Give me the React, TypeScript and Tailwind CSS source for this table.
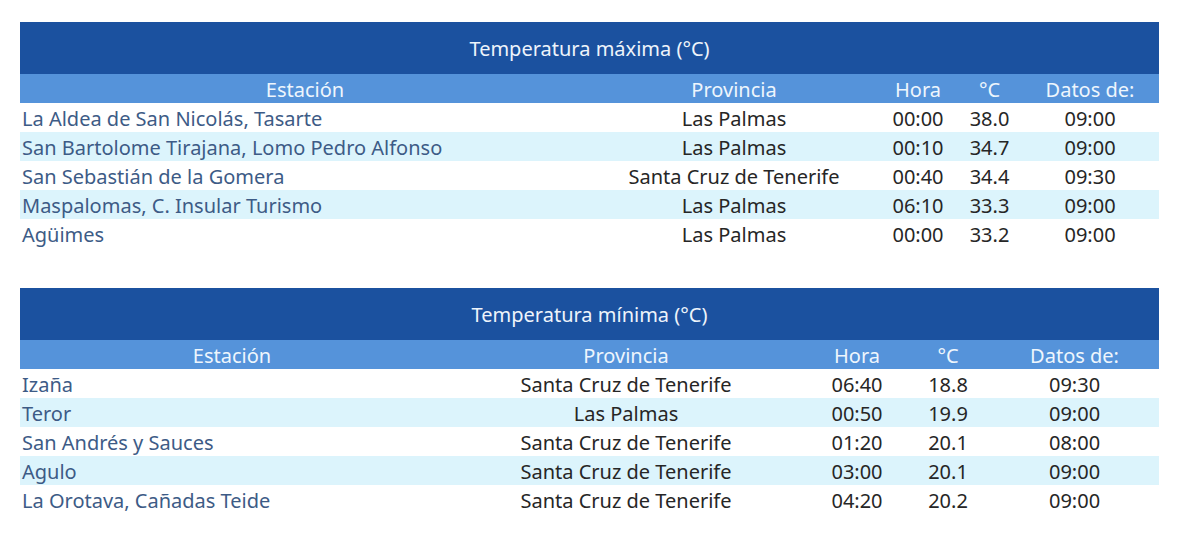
import React from "react";

type Row = [string, string, string, string, string];

const maxRows: Row[] = [
  ["La Aldea de San Nicolás, Tasarte", "Las Palmas", "00:00", "38.0", "09:00"],
  ["San Bartolome Tirajana, Lomo Pedro Alfonso", "Las Palmas", "00:10", "34.7", "09:00"],
  ["San Sebastián de la Gomera", "Santa Cruz de Tenerife", "00:40", "34.4", "09:30"],
  ["Maspalomas, C. Insular Turismo", "Las Palmas", "06:10", "33.3", "09:00"],
  ["Agüimes", "Las Palmas", "00:00", "33.2", "09:00"],
];

const minRows: Row[] = [
  ["Izaña", "Santa Cruz de Tenerife", "06:40", "18.8", "09:30"],
  ["Teror", "Las Palmas", "00:50", "19.9", "09:00"],
  ["San Andrés y Sauces", "Santa Cruz de Tenerife", "01:20", "20.1", "08:00"],
  ["Agulo", "Santa Cruz de Tenerife", "03:00", "20.1", "09:00"],
  ["La Orotava, Cañadas Teide", "Santa Cruz de Tenerife", "04:20", "20.2", "09:00"],
];

function DataTable({
  title,
  rows,
  widths,
}: {
  title: string;
  rows: Row[];
  widths: number[];
}) {
  return (
    <table className="w-[1139px] table-fixed border-collapse">
      <colgroup>
        {widths.map((w, i) => (
          <col key={i} style={{ width: w }} />
        ))}
      </colgroup>
      <thead>
        <tr className="h-[52px] bg-[#1b519f]">
          <th colSpan={5} className="p-0 pt-[2px] text-center font-normal text-[#eef4fb]">
            {title}
          </th>
        </tr>
        <tr className="h-[29px] bg-[#5593da]">
          {["Estación", "Provincia", "Hora", "°C", "Datos de:"].map((h) => (
            <th key={h} className="p-0 pt-[2px] text-center font-normal text-[#eef6fd]">
              {h}
            </th>
          ))}
        </tr>
      </thead>
      <tbody>
        {rows.map((r, i) => (
          <tr key={i} className={`h-[29px] ${i % 2 === 1 ? "bg-[#dcf4fc]" : "bg-white"}`}>
            <td className="p-0 pt-[2px] pl-[2px] text-left text-[#3d5b86] whitespace-nowrap">{r[0]}</td>
            <td className="p-0 pt-[2px] text-center text-[#262626] whitespace-nowrap">{r[1]}</td>
            <td className="p-0 pt-[2px] text-center text-[#262626]">{r[2]}</td>
            <td className="p-0 pt-[2px] text-center text-[#262626]">{r[3]}</td>
            <td className="p-0 pt-[2px] text-center text-[#262626]">{r[4]}</td>
          </tr>
        ))}
      </tbody>
    </table>
  );
}

export default function App() {
  return (
    <div
      className="w-[1200px] h-[544px] bg-white pl-[20px] pt-[22px] flex flex-col gap-[40px] text-[20px] leading-none"
      style={{ fontFamily: '"Noto Sans", "Open Sans", sans-serif' }}
    >
      <DataTable title="Temperatura máxima (°C)" rows={maxRows} widths={[570, 288, 80, 63, 138]} />
      <DataTable title="Temperatura mínima (°C)" rows={minRows} widths={[424, 364, 98, 84, 169]} />
    </div>
  );
}
